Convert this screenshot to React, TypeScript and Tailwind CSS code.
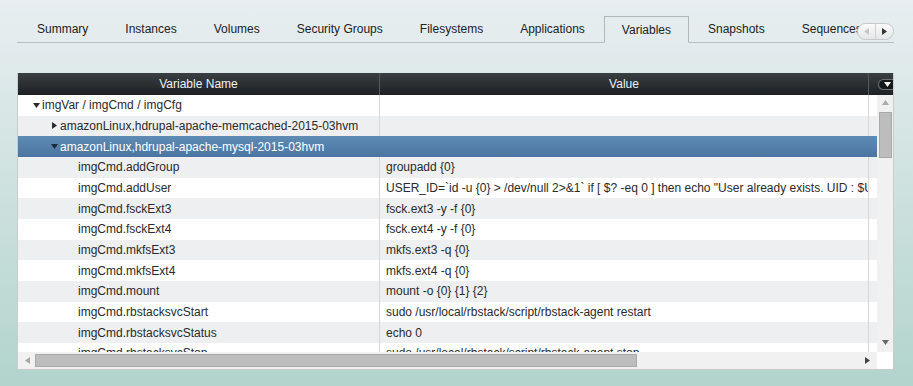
import clsx from "clsx";

type Row = {
  name: string;
  level: number;
  arrow?: "down" | "right";
  value?: string;
  selected?: boolean;
};

const tabs = [
  "Summary",
  "Instances",
  "Volumes",
  "Security Groups",
  "Filesystems",
  "Applications",
  "Variables",
  "Snapshots",
  "Sequences",
];

const rows: Row[] = [
  { name: "imgVar / imgCmd / imgCfg", level: 0, arrow: "down" },
  { name: "amazonLinux,hdrupal-apache-memcached-2015-03hvm", level: 1, arrow: "right" },
  { name: "amazonLinux,hdrupal-apache-mysql-2015-03hvm", level: 1, arrow: "down", selected: true },
  { name: "imgCmd.addGroup", level: 2, value: "groupadd {0}" },
  {
    name: "imgCmd.addUser",
    level: 2,
    value:
      'USER_ID=`id -u {0} > /dev/null 2>&1` if [ $? -eq 0 ] then echo "User already exists. UID : $USER_ID" else useradd {0} fi',
  },
  { name: "imgCmd.fsckExt3", level: 2, value: "fsck.ext3 -y -f {0}" },
  { name: "imgCmd.fsckExt4", level: 2, value: "fsck.ext4 -y -f {0}" },
  { name: "imgCmd.mkfsExt3", level: 2, value: "mkfs.ext3 -q {0}" },
  { name: "imgCmd.mkfsExt4", level: 2, value: "mkfs.ext4 -q {0}" },
  { name: "imgCmd.mount", level: 2, value: "mount -o {0} {1} {2}" },
  { name: "imgCmd.rbstacksvcStart", level: 2, value: "sudo /usr/local/rbstack/script/rbstack-agent restart" },
  { name: "imgCmd.rbstacksvcStatus", level: 2, value: "echo 0" },
  { name: "imgCmd.rbstacksvcStop", level: 2, value: "sudo /usr/local/rbstack/script/rbstack-agent stop" },
];

const Arrow = ({ dir, color }: { dir: "down" | "right" | "up" | "left"; color: string }) => {
  const pts = {
    down: "0,1 7,1 3.5,6",
    right: "1,0 6,3.5 1,7",
    up: "0,6 7,6 3.5,1",
    left: "6,0 1,3.5 6,7",
  }[dir];
  return (
    <svg width="7" height="7" viewBox="0 0 7 7">
      <polygon points={pts} fill={color} />
    </svg>
  );
};

const TabBar = () => (
  <div className="relative h-[27px] w-[877px] overflow-hidden">
    <div className="flex h-full items-end gap-px border-b border-[#b9bdc0] pl-[2px]">
      {tabs.map((t) => (
        <div
          key={t}
          className={clsx(
            "flex h-[27px] shrink-0 items-center px-[17px] pt-[1px] text-[12px] text-[#222]",
            t === "Variables"
              ? "-mb-px border border-[#b4b7b9] border-b-[#e3ebed]"
              : "border border-transparent"
          )}
        >
          {t}
        </div>
      ))}
    </div>
    <div className="absolute right-0 top-[7px] flex h-[17px] w-[37px] overflow-hidden rounded-full border border-[#c6c8ca] bg-gradient-to-b from-[#fbfbfb] to-[#e4e6e7]">
      <div className="flex flex-1 items-center justify-center border-r border-[#cfd1d3]">
        <Arrow dir="left" color="#c8c8c8" />
      </div>
      <div className="flex flex-1 items-center justify-center">
        <Arrow dir="right" color="#333" />
      </div>
    </div>
  </div>
);

const GridRow = ({ row, index }: { row: Row; index: number }) => {
  const bg = row.selected
    ? "bg-gradient-to-b from-[#5e8cb5] to-[#4a75a0] text-white"
    : index % 2 === 0
    ? "bg-white text-[#2a2a2a]"
    : "bg-[#eeeff0] text-[#2a2a2a]";
  const line = row.selected ? "border-transparent" : "border-[#d6d6d6]";
  return (
    <div className={clsx("flex h-[20.67px] shrink-0 whitespace-nowrap text-[12px]", bg)}>
      <div
        className={clsx("flex w-[362px] shrink-0 items-center overflow-hidden border-r", line)}
        style={{ paddingLeft: 15 + 18 * row.level }}
      >
        <span className="flex w-[9px] shrink-0 items-center">
          {row.arrow && <Arrow dir={row.arrow} color={row.selected ? "#1d2a36" : "#2a2a2a"} />}
        </span>
        <span>{row.name}</span>
      </div>
      <div className={clsx("flex w-[489px] shrink-0 items-center overflow-hidden border-r pl-[6px]", line)}>
        {row.value}
      </div>
      <div className="flex-1" />
    </div>
  );
};

const Grid = () => (
  <div className="flex h-[297px] w-[877px] flex-col border-x border-b border-[#c9cbcc] bg-white">
    <div className="flex h-[22px] shrink-0 bg-gradient-to-b from-[#3a3f43] to-[#1d2124] text-[12px] text-[#eef2f4]">
      <div className="flex w-[362px] items-center justify-center border-r border-[#55595c]">Variable Name</div>
      <div className="flex w-[489px] items-center justify-center border-r border-[#55595c]">Value</div>
      <div className="flex flex-1 items-center justify-end">
        <div className="flex h-[11px] w-[15px] items-center justify-center rounded-l-full border border-r-0 border-[#6b7074] bg-[#15181a] pl-[2px]">
          <svg width="7" height="5" viewBox="0 0 7 5">
            <polygon points="0,0 7,0 3.5,5" fill="#f2f2f2" />
          </svg>
        </div>
      </div>
    </div>
    <div className="flex h-[257px] shrink-0">
      <div className="flex w-[859px] flex-col overflow-hidden">
        {rows.map((r, i) => (
          <GridRow key={r.name} row={r} index={i} />
        ))}
      </div>
      <div className="relative flex flex-1 flex-col items-center bg-[#f1f1f1]">
        <div className="mt-[4px]">
          <Arrow dir="up" color="#a9a9a9" />
        </div>
        <div className="mt-[6px] h-[46px] w-[13px] border border-[#a8a8a8] bg-[#bdbdbd]" />
        <div className="mt-auto mb-[6px]">
          <Arrow dir="down" color="#6a6a6a" />
        </div>
      </div>
    </div>
    <div className="flex h-[17px] shrink-0">
      <div className="flex w-[859px] items-center bg-[#f1f1f1]">
        <div className="ml-[6px]">
          <Arrow dir="left" color="#a9a9a9" />
        </div>
        <div className="ml-[4px] h-[13px] w-[602px] border border-[#a8a8a8] bg-[#bdbdbd]" />
        <div className="ml-auto mr-[6px]">
          <Arrow dir="right" color="#444" />
        </div>
      </div>
      <div className="flex-1 bg-white" />
    </div>
  </div>
);

export default function App() {
  return (
    <div
      className="h-[386px] w-[913px] overflow-hidden bg-gradient-to-b from-[#e8eef1] to-[#b2d4cd] pl-[17px] pt-[16px]"
      style={{ fontFamily: '"Liberation Sans", Arial, sans-serif' }}
    >
      <TabBar />
      <div className="mt-[30px]">
        <Grid />
      </div>
    </div>
  );
}
